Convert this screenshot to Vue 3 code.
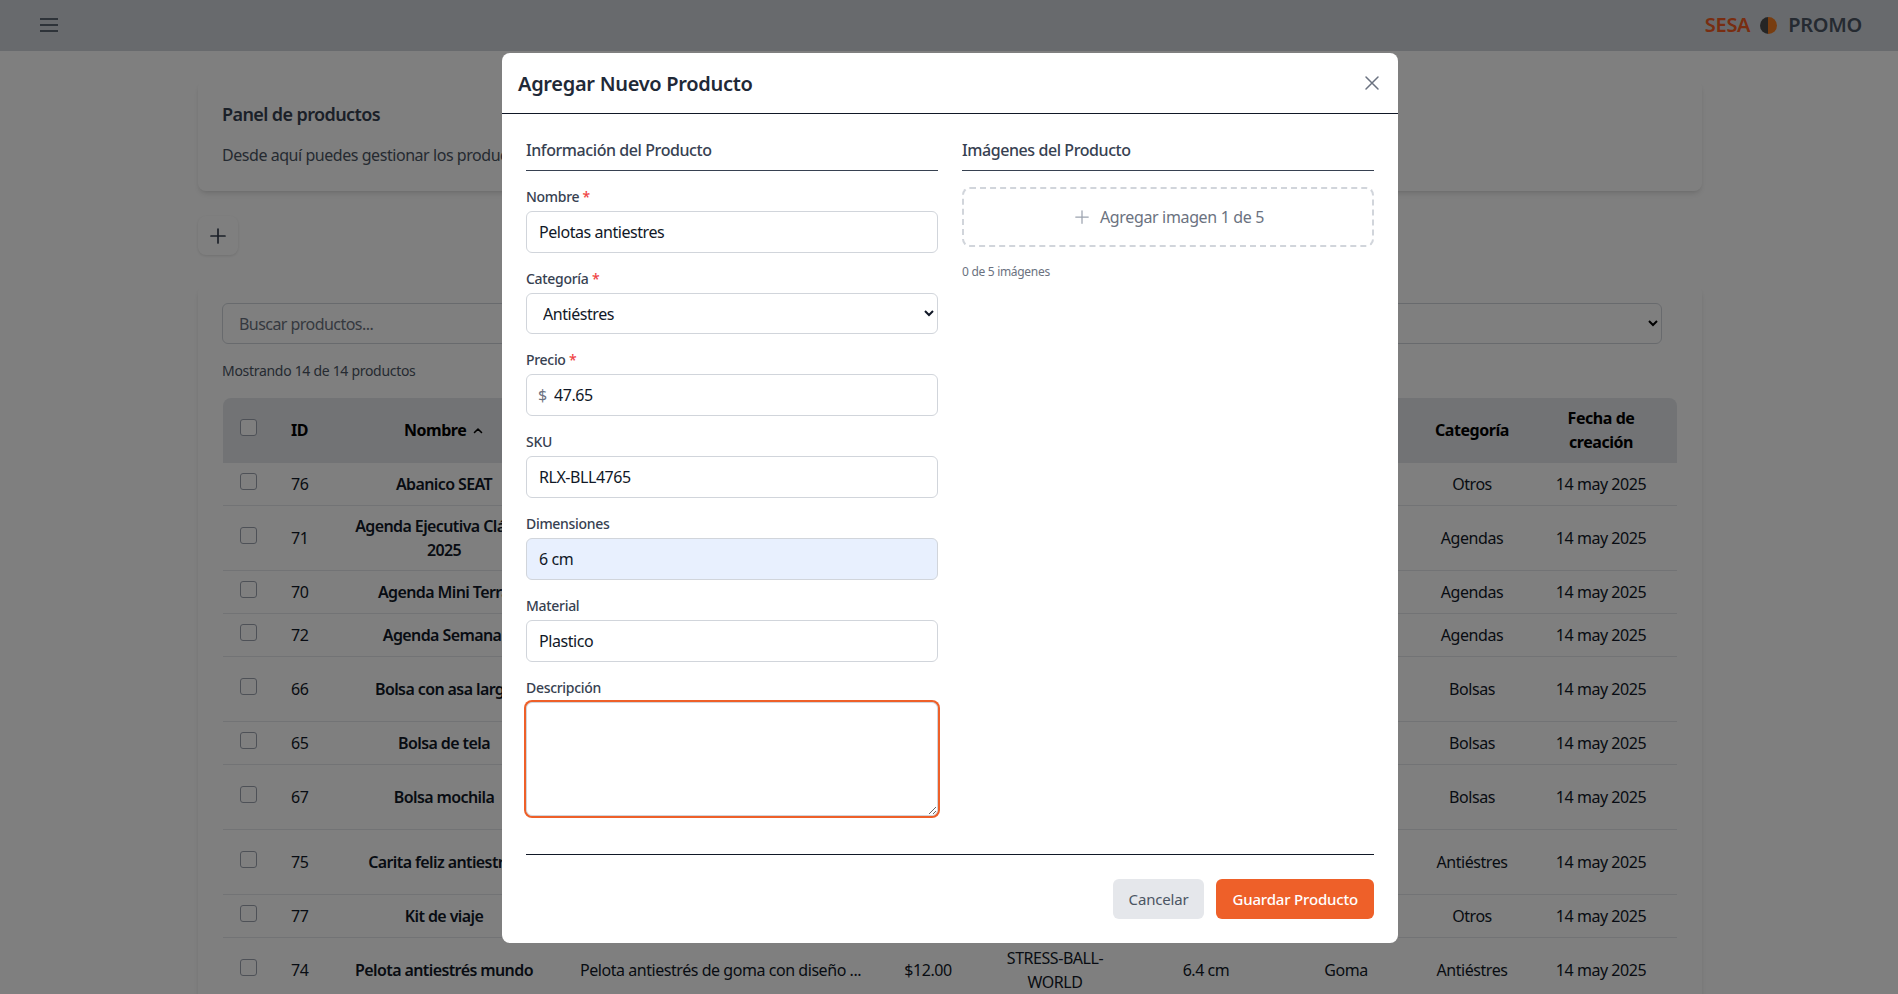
<template>
  <div class="page">
    <header class="topbar">
      <svg class="menu-icon" viewBox="0 0 24 24" fill="none" stroke="currentColor" stroke-width="1.7">
        <path d="M3 6h18M3 12h18M3 18h18" />
      </svg>
      <div class="logo">
        <span class="logo-sesa">SESA</span>
        <span class="logo-dot"></span>
        <span class="logo-promo">PROMO</span>
      </div>
    </header>

    <main class="main">
      <section class="card intro">
        <h1>Panel de productos</h1>
        <p>Desde aquí puedes gestionar los productos de tu tienda.</p>
      </section>

      <button class="add-btn" type="button">
        <svg viewBox="0 0 24 24" fill="none" stroke="currentColor" stroke-width="1.7" stroke-linecap="round">
          <path d="M12 5v14M5 12h14" />
        </svg>
      </button>

      <section class="card list">
        <div class="filters">
          <input class="field" type="text" placeholder="Buscar productos..." />
          <select class="field">
            <option>Todas las categorías</option>
          </select>
        </div>
        <p class="count">Mostrando 14 de 14 productos</p>

        <table class="products">
          <colgroup>
            <col v-for="w in colWidths" :key="w.name" :style="{ width: w.px + 'px' }" />
          </colgroup>
          <thead>
            <tr>
              <th><input class="check" type="checkbox" /></th>
              <th class="left">ID</th>
              <th>
                Nombre
                <svg class="sort" viewBox="0 0 12 12" fill="none" stroke="currentColor" stroke-width="1.6" stroke-linecap="round" stroke-linejoin="round">
                  <path d="M2.5 7.5 6 4l3.5 3.5" />
                </svg>
              </th>
              <th class="left">Descripción</th>
              <th>Precio</th>
              <th>SKU</th>
              <th>Dimensiones</th>
              <th>Material</th>
              <th>Categoría</th>
              <th>Fecha de creación</th>
            </tr>
          </thead>
          <tbody>
            <tr v-for="p in products" :key="p.id">
              <td><input class="check" type="checkbox" /></td>
              <td class="left">{{ p.id }}</td>
              <td class="name">{{ p.name }}</td>
              <td class="left">{{ p.desc }}</td>
              <td>{{ p.price }}</td>
              <td>{{ p.sku }}</td>
              <td>{{ p.dim }}</td>
              <td>{{ p.material }}</td>
              <td>{{ p.category }}</td>
              <td>14 may 2025</td>
            </tr>
          </tbody>
        </table>
      </section>
    </main>

    <div class="overlay">
      <div class="modal">
        <div class="modal-head">
          <h2>Agregar Nuevo Producto</h2>
          <svg class="close" viewBox="0 0 24 24" fill="none" stroke="currentColor" stroke-width="1.5" stroke-linecap="round">
            <path d="M6 18 18 6M6 6l12 12" />
          </svg>
        </div>

        <div class="modal-body">
          <div class="columns">
            <div>
              <h3>Información del Producto</h3>
              <label>Nombre <em>*</em></label>
              <input class="input" type="text" value="Pelotas antiestres" />
              <label>Categoría <em>*</em></label>
              <select class="input select">
                <option>Antiéstres</option>
              </select>
              <label>Precio <em>*</em></label>
              <div class="price">
                <span>$</span>
                <input class="input" type="text" value="47.65" />
              </div>
              <label>SKU</label>
              <input class="input" type="text" value="RLX-BLL4765" />
              <label>Dimensiones</label>
              <input class="input autofilled" type="text" value="6 cm" />
              <label>Material</label>
              <input class="input" type="text" value="Plastico" />
              <label>Descripción</label>
              <textarea class="input focused" rows="4"></textarea>
            </div>
            <div>
              <h3>Imágenes del Producto</h3>
              <div class="dropzone">
                <svg viewBox="0 0 24 24" fill="none" stroke="currentColor" stroke-width="1.5" stroke-linecap="round">
                  <path d="M12 4.5v15M4.5 12h15" />
                </svg>
                Agregar imagen 1 de 5
              </div>
              <p class="hint">0 de 5 imágenes</p>
            </div>
          </div>

          <div class="modal-foot">
            <button class="btn cancel" type="button">Cancelar</button>
            <button class="btn save" type="button">Guardar Producto</button>
          </div>
        </div>
      </div>
    </div>
  </div>
</template>

<script setup>
const colWidths = [
  { name: 'check', px: 52 },
  { name: 'id', px: 49 },
  { name: 'nombre', px: 240 },
  { name: 'desc', px: 321 },
  { name: 'precio', px: 86 },
  { name: 'sku', px: 168 },
  { name: 'dim', px: 134 },
  { name: 'material', px: 146 },
  { name: 'categoria', px: 106 },
  { name: 'fecha', px: 152 }
]

// solo las filas que caben en pantalla
const products = [
  { id: 76, name: 'Abanico SEAT', desc: 'Abanico de tela', price: '$8.00', sku: 'FAN-SEAT', dim: '20 cm', material: 'Tela', category: 'Otros' },
  { id: 71, name: 'Agenda Ejecutiva Clásica 2025', desc: 'Agenda ejecutiva', price: '$95.00', sku: 'AG-EJ-2025', dim: '21 cm', material: 'Piel', category: 'Agendas' },
  { id: 70, name: 'Agenda Mini Terra', desc: 'Agenda de bolsillo', price: '$60.00', sku: 'AG-MINI', dim: '14 cm', material: 'Papel', category: 'Agendas' },
  { id: 72, name: 'Agenda Semanal', desc: 'Agenda semanal', price: '$70.00', sku: 'AG-SEM', dim: '18 cm', material: 'Papel', category: 'Agendas' },
  { id: 66, name: 'Bolsa con asa larga', desc: 'Bolsa de algodón', price: '$25.00', sku: 'BOLSA-ASA-LARGA-01', dim: '38 cm', material: 'Algodón', category: 'Bolsas' },
  { id: 65, name: 'Bolsa de tela', desc: 'Bolsa reutilizable', price: '$20.00', sku: 'BOLSA-TELA', dim: '35 cm', material: 'Tela', category: 'Bolsas' },
  { id: 67, name: 'Bolsa mochila', desc: 'Bolsa tipo mochila', price: '$30.00', sku: 'BOLSA-MOCHILA-01', dim: '40 cm', material: 'Poliéster', category: 'Bolsas' },
  { id: 75, name: 'Carita feliz antiestrés', desc: 'Pelota con carita feliz', price: '$12.00', sku: 'STRESS-BALL-SMILE', dim: '6.4 cm', material: 'Goma', category: 'Antiéstres' },
  { id: 77, name: 'Kit de viaje', desc: 'Kit para viaje', price: '$45.00', sku: 'KIT-VIAJE', dim: '22 cm', material: 'Nylon', category: 'Otros' },
  { id: 74, name: 'Pelota antiestrés mundo', desc: 'Pelota antiestrés de goma con diseño ...', price: '$12.00', sku: 'STRESS-BALL-WORLD', dim: '6.4 cm', material: 'Goma', category: 'Antiéstres' }
]
</script>

<style>
html, body {
  margin: 0;
  height: 100%;
  overflow: hidden;
  background: #fff;
}
</style>

<style scoped>
.page {
  height: 994px;
  overflow: hidden;
  font-family: "Noto Sans", "Open Sans", sans-serif;
  font-size: 16px;
  line-height: 24px;
  letter-spacing: -0.45px;
  color: #111827;
}

.topbar {
  box-sizing: border-box;
  height: 51px;
  background: #d1d5db;
  display: flex;
  align-items: center;
  justify-content: space-between;
  padding: 0 36px 1px 37px;
}

.menu-icon {
  width: 24px;
  height: 24px;
  color: #374151;
}

.logo {
  display: flex;
  align-items: center;
  font-size: 20px;
  font-weight: 600;
  letter-spacing: -0.3px;
}

.logo-sesa {
  color: #f15a22;
}

.logo-promo {
  color: #4b5563;
}

.logo-dot {
  width: 17px;
  height: 17px;
  border-radius: 50%;
  margin: 0 11px 0 10px;
  background: linear-gradient(90deg, #4b4b4b 50%, #f07a20 50%);
}

.main {
  width: 1504px;
  margin-left: 198px;
  padding-top: 29px;
}

.card {
  background: #fff;
  border-radius: 8px;
  box-shadow: 0 4px 6px -1px rgba(0, 0, 0, 0.1), 0 2px 4px -2px rgba(0, 0, 0, 0.1);
}

.intro {
  padding: 24px;
}

.intro h1 {
  margin: 0 0 19px;
  font-size: 18px;
  line-height: 20px;
  font-weight: 600;
  letter-spacing: -0.6px;
  color: #374151;
}

.intro p {
  margin: 0;
  color: #4b5563;
}

.add-btn {
  display: flex;
  align-items: center;
  justify-content: center;
  width: 40px;
  height: 39px;
  margin: 25px 0 30px;
  padding: 0;
  border: 0;
  border-radius: 8px;
  background: #fff;
  color: #374151;
  box-shadow: 0 1px 3px rgba(0, 0, 0, 0.12);
}

.add-btn svg {
  width: 24px;
  height: 24px;
}

.list {
  padding: 18px 25px 0 24px;
}

.filters {
  display: grid;
  grid-template-columns: 1fr 1fr;
  gap: 16px;
  width: 1440px;
}

.field {
  box-sizing: border-box;
  height: 41px;
  border: 1px solid #d1d5db;
  border-radius: 6px;
  background: #fff;
  padding: 0 16px;
  font: inherit;
  letter-spacing: -0.55px;
}

.field::placeholder {
  color: #6b7280;
}

.count {
  margin: 17px 0 17px;
  font-size: 14px;
  line-height: 20px;
  letter-spacing: -0.3px;
  color: #4b5563;
}

.products {
  table-layout: fixed;
  width: 1454px;
  margin-left: 1px;
  border-collapse: separate;
  border-spacing: 0;
}

.products th,
.products td {
  padding: 8px 16px;
  text-align: center;
  vertical-align: middle;
  border-bottom: 1px solid #e5e7eb;
}

.products th {
  height: 48px;
  background: #e5e7eb;
  font-weight: 700;
  color: #000;
}

.products th:first-child {
  border-top-left-radius: 8px;
}

.products th:last-child {
  border-top-right-radius: 8px;
}

.products td {
  height: 26px;
}

.products .left {
  text-align: left;
}

.products .name {
  font-weight: 600;
  letter-spacing: -0.6px;
}

.check {
  appearance: none;
  display: block;
  box-sizing: border-box;
  width: 17px;
  height: 17px;
  margin: 0 0 5px 1px;
  border: 1.5px solid #9ca3af;
  border-radius: 3px;
  background: #fff;
}

.sort {
  width: 12px;
  height: 12px;
  margin-left: 2px;
  vertical-align: -1px;
}

.overlay {
  position: fixed;
  inset: 0;
  padding: 2px 0 0 2px;
  box-sizing: border-box;
  display: flex;
  align-items: center;
  justify-content: center;
  background: rgba(0, 0, 0, 0.5);
}

.modal {
  width: 896px;
  background: #fff;
  border-radius: 8px;
  letter-spacing: -0.3px;
}

.modal-head {
  display: flex;
  align-items: center;
  justify-content: space-between;
  padding: 16px 14px 16px 16px;
  border-bottom: 1px solid #111827;
}

.modal-head h2 {
  margin: 0;
  height: 28px;
  font-size: 20px;
  line-height: 30px;
  font-weight: 600;
  color: #1f2937;
}

.close {
  width: 24px;
  height: 24px;
  color: #6b7280;
}

.modal-body {
  padding: 24px;
}

.columns {
  display: grid;
  grid-template-columns: 412px 412px;
  gap: 24px;
}

h3 {
  margin: 0 0 16px;
  padding-bottom: 8px;
  border-bottom: 1px solid #374151;
  font-size: 16px;
  font-weight: 500;
  letter-spacing: -0.42px;
  color: #374151;
}

label {
  display: block;
  margin: 16px 0 4px;
  font-size: 14px;
  line-height: 20px;
  font-weight: 500;
  color: #374151;
}

h3 + label {
  margin-top: 0;
}

label em {
  font-style: normal;
  color: #ef4444;
}

.input {
  display: block;
  box-sizing: border-box;
  width: 100%;
  height: 42px;
  padding: 8px 12px;
  border: 1px solid #d1d5db;
  border-radius: 6px;
  background: #fff;
  outline: none;
  font: inherit;
  letter-spacing: -0.45px;
  color: #111827;
}

.select {
  height: 41px;
}

textarea.input {
  height: 114px;
}

.autofilled {
  background: #e8f0fe;
}

.focused {
  box-shadow: 0 0 0 2px #ee6029;
}

.price {
  position: relative;
}

.price span {
  position: absolute;
  left: 12px;
  top: 9px;
  color: #6b7280;
}

.price .input {
  padding-left: 27px;
}

.dropzone {
  box-sizing: border-box;
  height: 60px;
  display: flex;
  align-items: center;
  justify-content: center;
  gap: 8px;
  border: 2px dashed #d1d5db;
  border-radius: 8px;
  letter-spacing: -0.35px;
  color: #6b7280;
}

.dropzone svg {
  width: 20px;
  height: 20px;
  color: #9ca3af;
}

.hint {
  margin: 16px 0 0;
  font-size: 12px;
  line-height: 18px;
  color: #6b7280;
}

.modal-foot {
  display: flex;
  justify-content: flex-end;
  gap: 12px;
  margin-top: 38px;
  padding-top: 24px;
  border-top: 1px solid #111827;
}

.btn {
  height: 40px;
  padding: 0 16px;
  border: 0;
  border-radius: 6px;
  font: inherit;
  font-size: 15px;
  letter-spacing: -0.18px;
}

.cancel {
  background: #e5e7eb;
  color: #4b5563;
}

.save {
  background: #ee6029;
  color: #fff;
  font-weight: 500;
}
</style>
